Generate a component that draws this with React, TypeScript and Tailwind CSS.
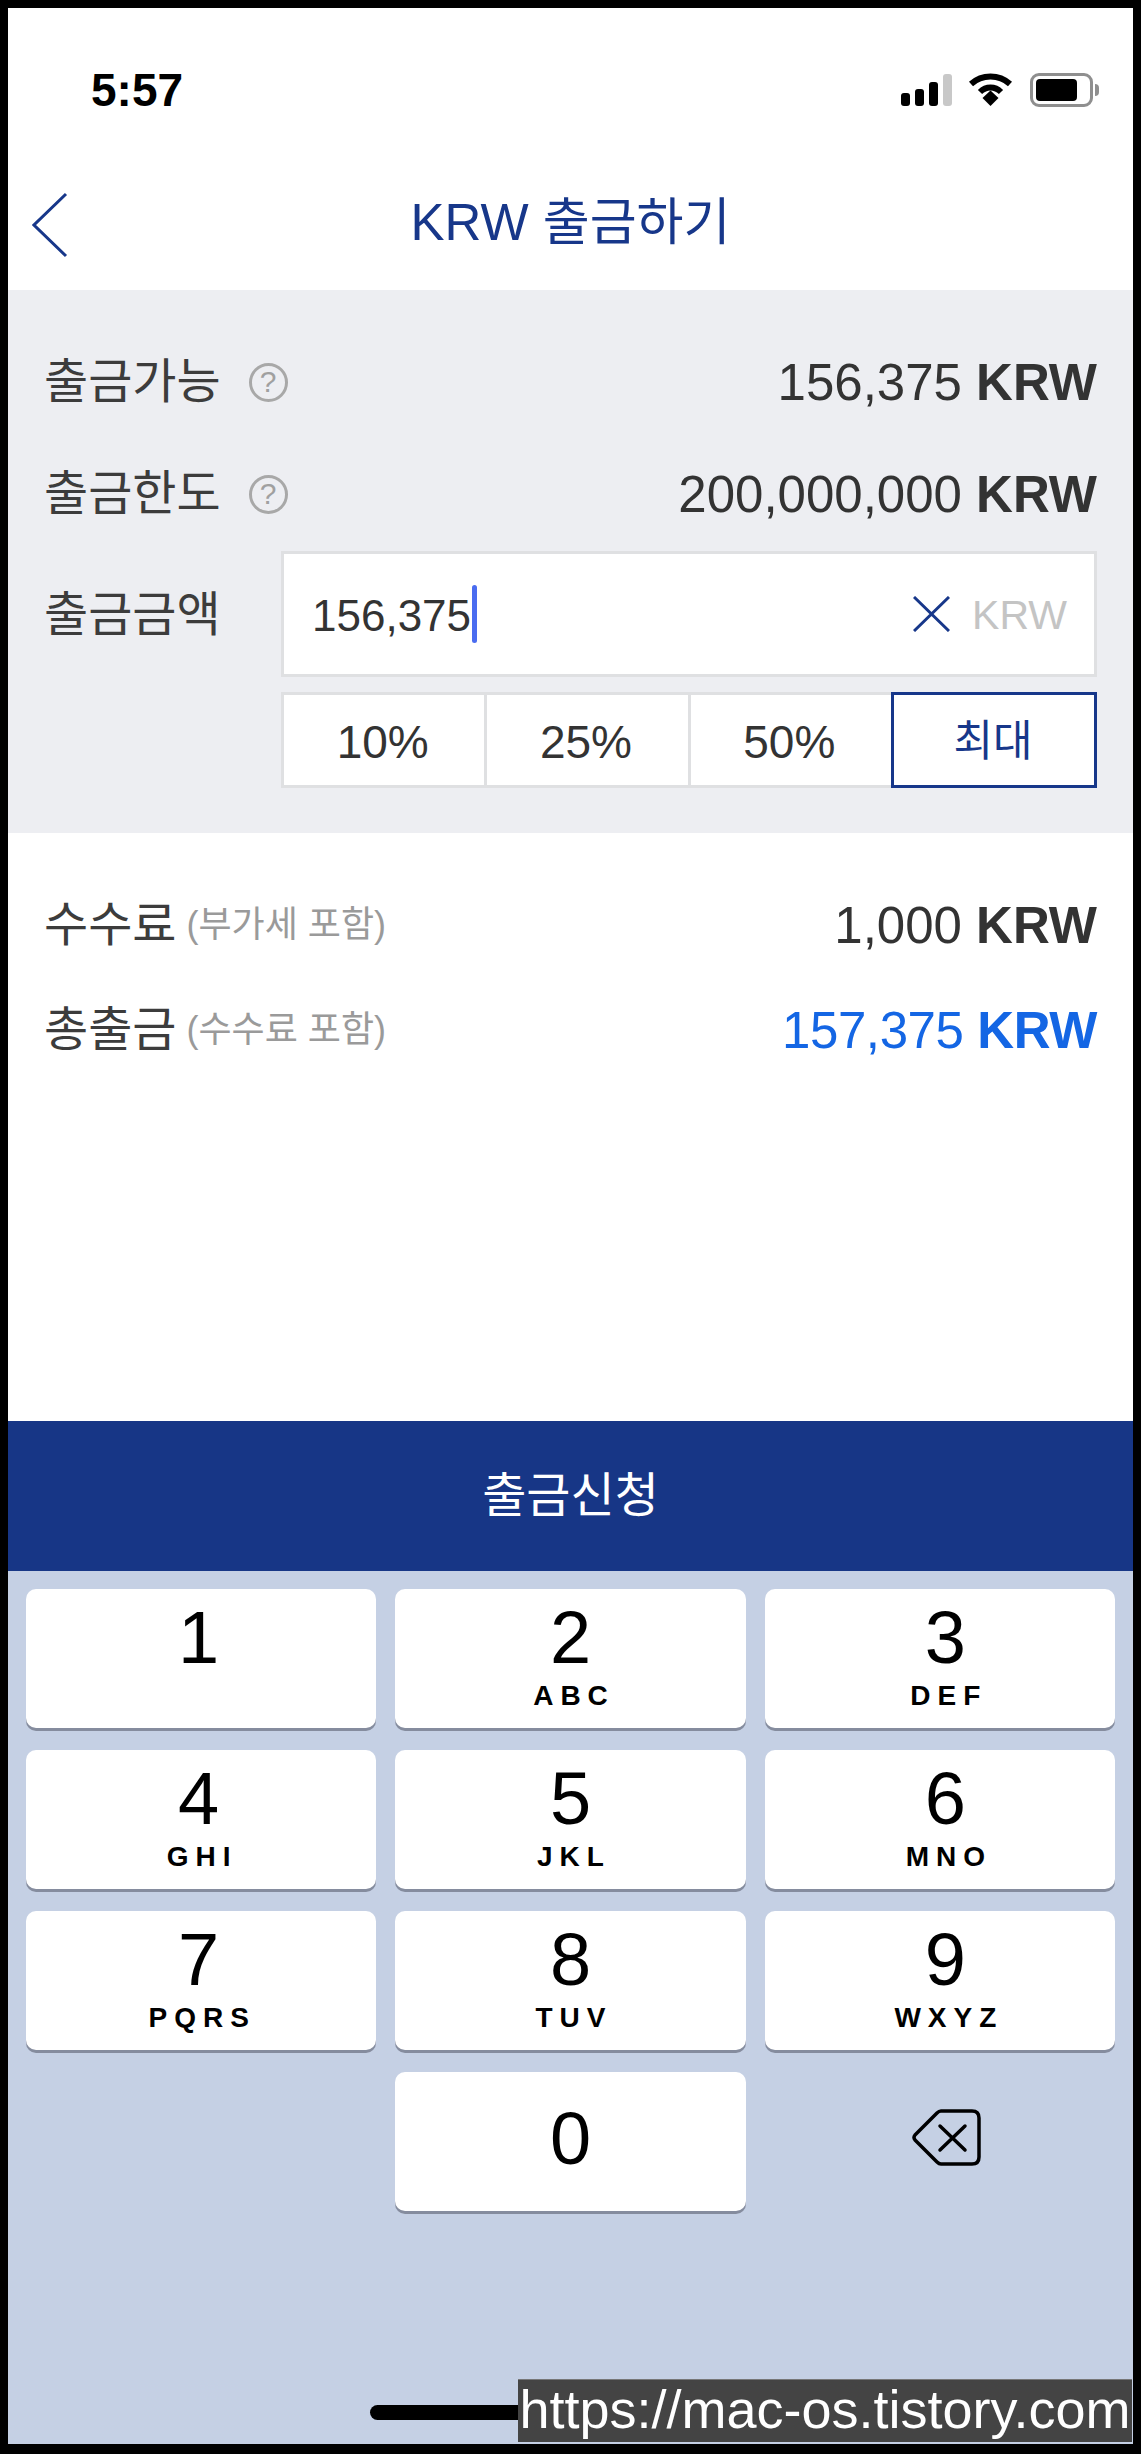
const keys = [
  { num: '1', letters: '', shift: 'pr-[5px]' },
  { num: '2', letters: 'ABC', shift: '' },
  { num: '3', letters: 'DEF', shift: 'pl-[11px]' },
  { num: '4', letters: 'GHI', shift: 'pr-[5px]' },
  { num: '5', letters: 'JKL', shift: '' },
  { num: '6', letters: 'MNO', shift: 'pl-[11px]' },
  { num: '7', letters: 'PQRS', shift: 'pr-[5px]' },
  { num: '8', letters: 'TUV', shift: '' },
  { num: '9', letters: 'WXYZ', shift: 'pl-[11px]' },
];

const font = "font-['Liberation_Sans','Noto_Sans_CJK_KR',sans-serif]";

function HelpIcon() {
  return (
    <div className="ml-[28px] flex h-[39px] w-[39px] items-center justify-center rounded-full border-[3px] border-[#a8a8a8] text-[30px] leading-none text-[#a0a0a0]">
      ?
    </div>
  );
}

function Amount({ value, unit, blue }: { value: string; unit: string; blue?: boolean }) {
  return (
    <div className={`text-[51px] leading-none ${blue ? 'tracking-[-0.4px] text-[#1466e4]' : 'text-[#333333]'}`}>
      {value} <span className="font-bold">{unit}</span>
    </div>
  );
}

function Key({ num, letters, shift }: { num: string; letters?: string; shift?: string }) {
  return (
    <div className={`flex h-[139px] flex-col items-center rounded-[10px] bg-white pt-[9px] text-black shadow-[0_3px_0_#858c9e] ${shift ?? ''}`}>
      <div className={`text-[74px] leading-[80px] ${letters === undefined ? 'mt-[18px]' : ''}`}>{num}</div>
      {letters && <div className="mt-[3px] pl-[7px] text-[28px] font-bold leading-[30px] tracking-[7px]">{letters}</div>}
    </div>
  );
}

export default function App() {
  return (
    <div className={`relative h-[2454px] w-[1141px] bg-black pb-[10px] pl-2 pr-2 pt-2 ${font}`}>
      <div className="flex h-full flex-col">
        {/* header */}
        <div className="h-[282px] bg-white">
          <div className="flex h-[152px] items-start justify-between pl-[83px] pr-[40px] pt-[62px]">
            <div className="text-[46px] font-bold leading-[40px] text-black">5:57</div>
            <div className="flex items-start pt-[3px]">
              <svg width="51" height="33" viewBox="0 0 51 33">
                <rect x="0" y="20" width="9" height="13" rx="3" fill="#000" />
                <rect x="14" y="16" width="9" height="17" rx="3" fill="#000" />
                <rect x="28" y="9" width="9" height="24" rx="3" fill="#000" />
                <rect x="42" y="1" width="9" height="32" rx="3" fill="#c8c8c8" />
              </svg>
              <svg className="ml-[16px]" width="45" height="33" viewBox="0 0 45 33" fill="none" stroke="#000" strokeWidth="6">
                <path d="M3 11 C14 1 31 1 42 11" />
                <path d="M12 19 C18 13 27 13 33 19" />
                <path d="M14.5 25 L22.5 17.5 L30.5 25 L22.5 33 Z" fill="#000" stroke="none" />
              </svg>
              <div className="relative ml-[17px] flex h-[34px] w-[63px] items-center rounded-[9px] border-[3px] border-[#8f8f8f] pl-[3px]">
                <div className="h-[22px] w-[41px] rounded-[4px] bg-black" />
                <div className="absolute -right-[9px] top-[8px] h-[12px] w-[4px] rounded-r bg-[#8f8f8f]" />
              </div>
            </div>
          </div>
          <div className="relative flex h-[130px] items-center justify-center">
            <svg className="absolute left-[24px] top-[32px]" width="36" height="66" viewBox="0 0 36 66" fill="none" stroke="#17378a" strokeWidth="3">
              <path d="M34 2 L2 33 L34 64" />
            </svg>
            <div className="pb-[5px] text-[51px] leading-none text-[#17378a]">KRW 출금하기</div>
          </div>
        </div>

        {/* limits and amount */}
        <div className="h-[543px] bg-[#edeef2] pl-[36px] pr-[36px] pt-[34px]">
          <div className="flex h-[112px] items-start justify-between pt-[33px]">
            <div className="mt-[3px] flex items-center">
              <div className="text-[48px] leading-[44px] text-[#3c3c3c]">출금가능</div>
              <HelpIcon />
            </div>
            <Amount value="156,375" unit="KRW" />
          </div>
          <div className="flex h-[115px] items-start justify-between pt-[33px]">
            <div className="mt-[3px] flex items-center">
              <div className="text-[48px] leading-[44px] text-[#3c3c3c]">출금한도</div>
              <HelpIcon />
            </div>
            <Amount value="200,000,000" unit="KRW" />
          </div>
          <div className="flex">
            <div className="flex h-[126px] w-[237px] items-center pt-[2px] text-[48px] text-[#3c3c3c]">출금금액</div>
            <div className="flex h-[126px] flex-1 items-center border-[3px] border-[#dfe0e2] bg-white pl-[28px] pr-[27px]">
              <div className="pt-[4px] text-[44px] leading-none text-[#333333]">156,375</div>
              <div className="ml-[1px] h-[58px] w-[5px] rounded bg-[#4a6cf0]" />
              <svg className="ml-auto" width="37" height="36" viewBox="0 0 37 36" fill="none" stroke="#17378a" strokeWidth="3">
                <path d="M1 1 L36 35 M36 1 L1 35" />
              </svg>
              <div className="ml-[22px] pt-[2px] text-[41px] leading-none text-[#c4c4c4]">KRW</div>
            </div>
          </div>
          <div className="ml-[237px] mt-[15px] flex h-[96px]">
            {['10%', '25%', '50%'].map((p) => (
              <div key={p} className="flex flex-1 items-center justify-center border-y-[3px] border-l-[3px] border-[#dfe0e2] bg-white pr-[3px] pt-[4px] text-[46px] text-[#333333]">
                {p}
              </div>
            ))}
            <div className="flex w-[206px] items-center justify-center border-[3px] border-[#17378a] bg-white pr-[2px] pt-[3px] text-[43px] text-[#17378a]">최대</div>
          </div>
        </div>

        {/* fee and total */}
        <div className="h-[588px] flex-none bg-white pl-[36px] pr-[36px] pt-[64px]">
          <div className="flex h-[105px] items-start justify-between">
            <div className="flex items-center">
              <span className="text-[48px] leading-[56px] text-[#3c3c3c]">수수료</span>
              <span className="ml-[10px] text-[36px] leading-[56px] text-[#9a9a9a]">(부가세 포함)</span>
            </div>
            <div className="pt-[3px]">
              <Amount value="1,000" unit="KRW" />
            </div>
          </div>
          <div className="flex items-start justify-between">
            <div className="flex items-center">
              <span className="text-[48px] leading-[56px] text-[#3c3c3c]">총출금</span>
              <span className="ml-[10px] text-[36px] leading-[56px] text-[#9a9a9a]">(수수료 포함)</span>
            </div>
            <div className="pt-[3px]">
              <Amount value="157,375" unit="KRW" blue />
            </div>
          </div>
        </div>

        {/* submit */}
        <div className="flex h-[150px] items-center justify-center bg-[#173686] text-[48px] text-white">출금신청</div>

        {/* keypad */}
        <div className="flex-1 bg-[#c5d0e4] pl-[18px] pr-[18px] pt-[18px]">
          <div className="grid grid-cols-3 gap-x-[19px] gap-y-[22px]">
            {keys.map((k) => (
              <Key key={k.num} num={k.num} letters={k.letters} shift={k.shift} />
            ))}
            <div />
            <Key num="0" />
            <div className="flex items-start justify-center pl-[14px] pt-[37px]">
              <svg width="69" height="57" viewBox="0 0 69 57" fill="none" stroke="#000" strokeWidth="3.5" strokeLinejoin="round" strokeLinecap="round">
                <path d="M29 2 H60 Q67 2 67 9 V48 Q67 55 60 55 H29 Q27 55 25 53 L3 31 Q1 28.5 3 26 L25 4 Q27 2 29 2 Z" />
                <path d="M28 17 L53 41 M53 17 L28 41" />
              </svg>
            </div>
          </div>
        </div>
      </div>

      <div className="absolute left-[370px] top-[2405px] h-[15px] w-[402px] rounded-full bg-black" />
      <div className="absolute left-[518px] top-[2379px] flex h-[63px] w-[614px] items-center justify-center border-t border-[#777] bg-[#444444] pb-[4px] text-[54px] leading-none text-white">
        https://mac-os.tistory.com
      </div>
    </div>
  );
}
